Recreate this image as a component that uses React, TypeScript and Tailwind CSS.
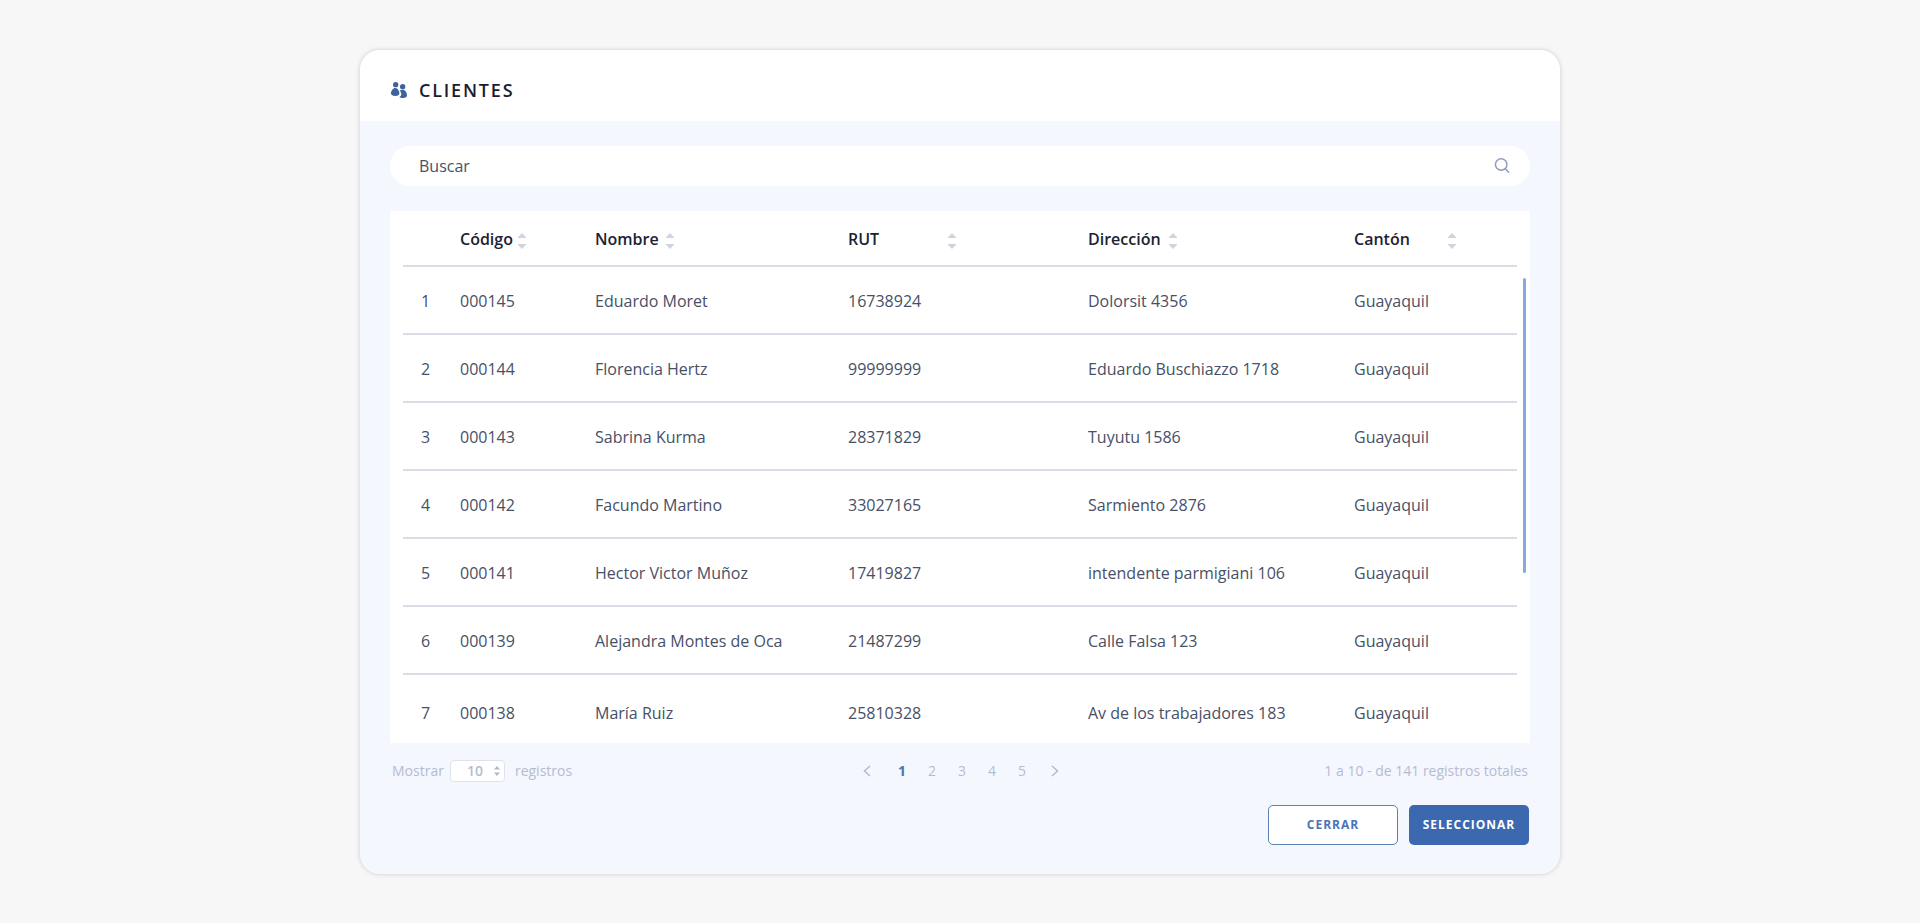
import { useState } from 'react';

interface Client {
  code: string;
  name: string;
  rut: string;
  address: string;
  canton: string;
}

const clients: Client[] = [
  { code: '000145', name: 'Eduardo Moret', rut: '16738924', address: 'Dolorsit 4356', canton: 'Guayaquil' },
  { code: '000144', name: 'Florencia Hertz', rut: '99999999', address: 'Eduardo Buschiazzo 1718', canton: 'Guayaquil' },
  { code: '000143', name: 'Sabrina Kurma', rut: '28371829', address: 'Tuyutu 1586', canton: 'Guayaquil' },
  { code: '000142', name: 'Facundo Martino', rut: '33027165', address: 'Sarmiento 2876', canton: 'Guayaquil' },
  { code: '000141', name: 'Hector Victor Muñoz', rut: '17419827', address: 'intendente parmigiani 106', canton: 'Guayaquil' },
  { code: '000139', name: 'Alejandra Montes de Oca', rut: '21487299', address: 'Calle Falsa 123', canton: 'Guayaquil' },
  { code: '000138', name: 'María Ruiz', rut: '25810328', address: 'Av de los trabajadores 183', canton: 'Guayaquil' },
];

const columns = [
  { key: 'code', label: 'Código', labelClass: 'w-[58px]' },
  { key: 'name', label: 'Nombre', labelClass: 'w-[71px]' },
  { key: 'rut', label: 'RUT', labelClass: 'w-[100px]' },
  { key: 'address', label: 'Dirección', labelClass: 'w-[81px]' },
  { key: 'canton', label: 'Cantón', labelClass: 'w-[94px]' },
];

const pages = [1, 2, 3, 4, 5];

function ClientsIcon() {
  return (
    <svg className="w-[18px] h-[18px]" viewBox="0 0 54 54" fill="#3d639d" aria-hidden="true">
      <circle cx="17" cy="11" r="8" />
      <circle cx="38" cy="17" r="8" />
      <path d="M16 21c6 0 12 8 12 16 0 6-4 8-12 8S3 43 3 37c0-8 6-16 13-16z" />
      <path d="M29 29c3-2 6-3 9-3 7 0 13 8 13 17 0 6-4 8-12 8-5 0-9-1-11-3 4-2 6-5 6-9s-2-7-5-10z" />
    </svg>
  );
}

function SearchIcon() {
  return (
    <svg className="w-4 h-4" viewBox="0 0 16 16" fill="none" stroke="#8e9bb9" strokeWidth="1.5" strokeLinecap="round" aria-hidden="true">
      <circle cx="7.2" cy="6.5" r="5.75" />
      <path d="M11.4 10.7l3.2 3.5" />
    </svg>
  );
}

function SortIcon() {
  return (
    <svg className="mt-1 w-2 h-4" viewBox="0 0 8 16" fill="#d1d4de" aria-hidden="true">
      <path d="M4 0l4 4.2v.8H0v-.8z" />
      <path d="M4 16l4-4.2V11H0v.8z" />
    </svg>
  );
}

function Chevron({ d }: { d: string }) {
  return (
    <svg className="w-2 h-3" viewBox="0 0 8 12" fill="none" stroke="#b4bcd2" strokeWidth="1.6" aria-hidden="true">
      <path d={d} />
    </svg>
  );
}

export default function App() {
  const [search, setSearch] = useState('');
  const [page, setPage] = useState(1);
  const [pageSize, setPageSize] = useState('10');

  const filtered = clients.filter((client) =>
    Object.values(client).some((value) => value.toLowerCase().includes(search.toLowerCase()))
  );

  return (
    <div className="min-h-screen bg-[#f7f7f7] px-6 py-[50px] font-['Open_Sans','Noto_Sans',sans-serif] text-base text-[#475066]">
      <main className="w-full max-w-[1200px] mx-auto rounded-[20px] overflow-hidden bg-[#f4f7fe] shadow-[0_0_5px_rgba(0,0,0,0.18)]">
        <header className="flex items-center gap-[11px] bg-white px-[30px] pt-7 pb-[19px]">
          <ClientsIcon />
          <h1 className="text-lg leading-6 font-semibold tracking-widest text-[#1d1b2e]">CLIENTES</h1>
        </header>

        <div className="px-[30px] pt-[25px] pb-[29px]">
          {/* Search */}
          <div className="flex items-center h-10 rounded-full bg-white pl-[29px] pr-5">
            <input
              type="text"
              aria-label="Buscar"
              placeholder="Buscar"
              value={search}
              onChange={(e) => setSearch(e.target.value)}
              className="flex-1 bg-transparent outline-none placeholder:text-[#475066]"
            />
            <button type="button" aria-label="Buscar clientes">
              <SearchIcon />
            </button>
          </div>

          {/* Table */}
          <div className="mt-[25px] flex items-start bg-white pl-[13px] pr-1">
            <table className="flex-1 table-fixed border-collapse text-left">
              <colgroup>
                <col className="w-[57px]" />
                <col className="w-[135px]" />
                <col className="w-[253px]" />
                <col className="w-[240px]" />
                <col className="w-[266px]" />
                <col className="w-[163px]" />
              </colgroup>
              <thead>
                <tr className="h-[55px] border-b-2 border-[#dadde5]">
                  <td />
                  {columns.map((column) => (
                    <th key={column.key} className="p-0 pt-0.5 font-semibold text-[#1c2233]">
                      <button type="button" className="flex items-center">
                        <span className={`text-left ${column.labelClass}`}>{column.label}</span>
                        <SortIcon />
                      </button>
                    </th>
                  ))}
                </tr>
              </thead>
              <tbody>
                {filtered.map((client, index) => (
                  <tr key={client.code} className="h-[68px] border-b-2 border-[#dadde5] *:pt-0.5 last:h-[69px] last:border-b-0 last:*:pt-2">
                    <td className="pl-[18px]">{index + 1}</td>
                    <td>{client.code}</td>
                    <td>{client.name}</td>
                    <td>{client.rut}</td>
                    <td>{client.address}</td>
                    <td>{client.canton}</td>
                  </tr>
                ))}
              </tbody>
            </table>
            <div className="ml-1.5 mt-[67px] w-[3px] h-[295px] rounded-full bg-[#85a8dd]" />
          </div>

          {/* Pagination */}
          <div className="mt-[17px] grid grid-cols-3 items-center px-0.5 text-sm text-[#b4bcd2]">
            <div className="flex items-center">
              <label htmlFor="page-size">Mostrar</label>
              <div className="relative ml-1.5 mr-2.5">
                <select
                  id="page-size"
                  value={pageSize}
                  onChange={(e) => setPageSize(e.target.value)}
                  className="block appearance-none w-[55px] h-[22px] rounded-sm border border-[#dfe3ec] bg-white pl-4 font-semibold leading-5 outline-none"
                >
                  <option>10</option>
                  <option>25</option>
                  <option>50</option>
                </select>
                <svg className="absolute right-[5px] top-1.5 w-1.5 h-2.5 pointer-events-none" viewBox="0 0 6 10" fill="#b0b8cc" aria-hidden="true">
                  <path d="M3 0l3 3.5H0zM3 10l3-3.5H0z" />
                </svg>
              </div>
              <span>registros</span>
            </div>
            <nav className="flex items-center justify-center" aria-label="Paginación">
              <button type="button" aria-label="Anterior" className="w-10 flex justify-center" onClick={() => setPage(Math.max(1, page - 1))}>
                <Chevron d="M7 1L1.5 6 7 11" />
              </button>
              {pages.map((n) => (
                <button
                  key={n}
                  type="button"
                  onClick={() => setPage(n)}
                  className={n === page ? 'w-[30px] font-bold text-[#4a74b4]' : 'w-[30px]'}
                >
                  {n}
                </button>
              ))}
              <button type="button" aria-label="Siguiente" className="w-9 flex justify-center" onClick={() => setPage(Math.min(5, page + 1))}>
                <Chevron d="M1 1l5.5 5L1 11" />
              </button>
            </nav>
            <p className="text-right">1 a 10 - de 141 registros totales</p>
          </div>

          <div className="mt-[23px] flex justify-end gap-[11px] pr-px text-xs font-bold tracking-[1px]">
            <button type="button" className="w-[130px] h-10 rounded-[5px] border border-[#5a80b4] bg-white text-[#4a74b4]">
              CERRAR
            </button>
            <button type="button" className="w-[120px] h-10 rounded-[5px] bg-[#3b68af] text-white">
              SELECCIONAR
            </button>
          </div>
        </div>
      </main>
    </div>
  );
}
